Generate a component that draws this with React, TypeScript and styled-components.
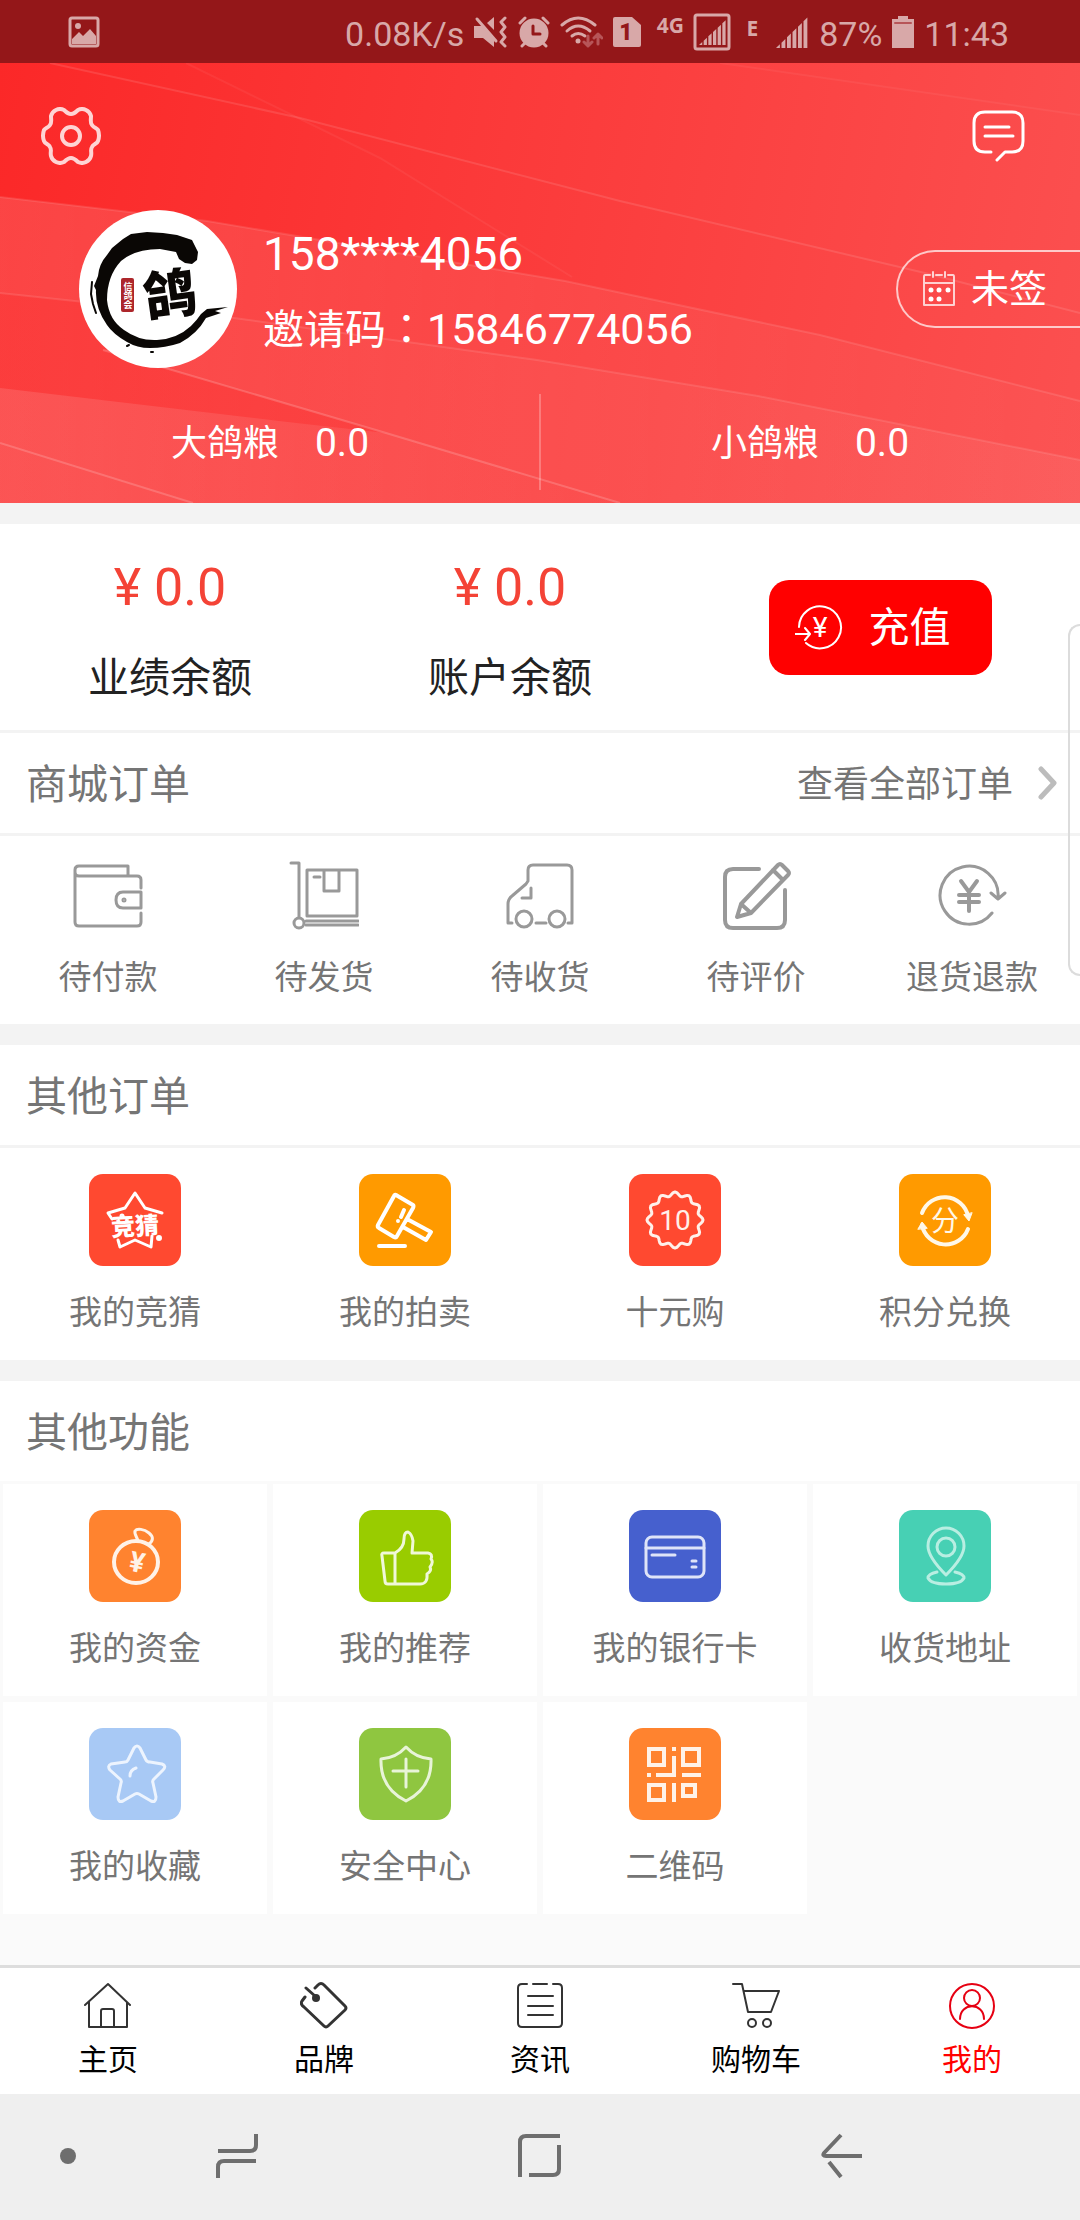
import React from 'react';
import styled, { createGlobalStyle } from 'styled-components';

const latin = 'Roboto, "Noto Sans CJK SC", sans-serif';

const GlobalStyle = createGlobalStyle`
  * { box-sizing: border-box; }
  body { margin: 0; background: #fafafa; font-family: ${latin}; }
  h1, h2, p { margin: 0; padding: 0; font-weight: 400; }
  button { border: 0; padding: 0; margin: 0; background: none; font: inherit; color: inherit; cursor: pointer; }
  a { color: inherit; text-decoration: none; }
  svg { display: block; flex: none; }
`;

const Page = styled.div`
  position: relative;
  display: flex;
  flex-direction: column;
  min-height: 100vh;
  overflow: hidden;
`;

/* ---------- status bar ---------- */

const StatusBar = styled.div`
  display: flex;
  align-items: center;
  justify-content: space-between;
  height: 63px;
  padding: 0 71px 0 68px;
  background: #941719;
  color: #d8a8a8;
  font-size: 34px;
  line-height: 42px;
`;

const StatusGroup = styled.div<{ $gap: number }>`
  display: flex;
  align-items: center;
  gap: ${(p) => p.$gap}px;
`;

const StatusText = styled.span`
  padding-top: 4px;
`;

const NetworkTag = styled.span`
  align-self: flex-start;
  font: 700 21px/24px "Noto Sans", sans-serif;
`;

/* ---------- profile header ---------- */

const Header = styled.header`
  position: relative;
  height: 440px;
  color: #fff;
  background: linear-gradient(100deg, #fb2828 0%, #fb3838 40%, #fb5050 100%);
`;

const HeaderArt = styled.svg`
  position: absolute;
  inset: 0;
  width: 100%;
  height: 100%;
`;

const HeaderBody = styled.div`
  position: relative;
  display: flex;
  flex-direction: column;
  height: 100%;
`;

const HeaderTools = styled.div`
  display: flex;
  justify-content: space-between;
  padding: 44px 55px 0 41px;
`;

const Profile = styled.div`
  display: flex;
  align-items: center;
  padding: 45px 0 0 79px;
`;

const Identity = styled.div`
  flex: 1;
  padding: 6px 0 0 26px;
`;

const Phone = styled.h1`
  font-size: 46px;
  line-height: 72px;
`;

const Invite = styled.p`
  font-size: 41px;
  line-height: 72px;
  b { font-weight: 400; font-size: 43px; }
  i { font-style: normal; font-family: "Noto Sans CJK TC", sans-serif; }
`;

const SignButton = styled.button`
  display: flex;
  align-items: center;
  gap: 16px;
  height: 78px;
  width: 184px;
  padding-left: 25px;
  border: 2px solid rgba(255, 255, 255, 0.7);
  border-right: 0;
  border-radius: 39px 0 0 39px;
  font-size: 38px;
  line-height: 48px;
`;

const GrainRow = styled.div`
  display: grid;
  grid-template-columns: 1fr 1fr;
  margin-top: 26px;
`;

const Grain = styled.div`
  display: flex;
  align-items: baseline;
  justify-content: center;
  gap: 36px;
  height: 96px;
  font-size: 36px;
  line-height: 98px;
  b { font-weight: 400; font-size: 39px; }
  & + & { box-shadow: -1px 0 0 rgba(255, 255, 255, 0.25), inset 1px 0 0 rgba(255, 255, 255, 0.25); }
`;

/* ---------- balances ---------- */

const Balances = styled.section`
  display: grid;
  grid-template-columns: 17fr 17fr 20fr;
  align-items: center;
  height: 227px;
  border-top: 21px solid #f3f3f3;
  background: #fff;
`;

const Balance = styled.div`
  display: flex;
  flex-direction: column;
  align-items: center;
  gap: 20px;
  padding-top: 12px;
`;

const Amount = styled.span`
  font-size: 52px;
  line-height: 70px;
  color: #f44336;
`;

const AmountLabel = styled.span`
  font-size: 41px;
  line-height: 70px;
  color: #222;
`;

const Recharge = styled.button`
  display: flex;
  align-items: center;
  justify-self: center;
  gap: 26px;
  width: 223px;
  height: 95px;
  padding-left: 26px;
  border-radius: 20px;
  background: #f00;
  color: #fff;
  font-size: 41px;
  line-height: 60px;
  span { padding-top: 2px; }
`;

/* ---------- sections ---------- */

const Section = styled.section<{ $spaced?: boolean }>`
  border-top: ${(p) => (p.$spaced ? 21 : 3)}px solid #f3f3f3;
`;

const SectionHead = styled.div`
  display: flex;
  align-items: center;
  justify-content: space-between;
  height: 100px;
  padding: 0 21px 0 26px;
  background: #fff;
  color: #757575;
`;

const Title = styled.h2`
  padding-top: 4px;
  font-size: 41px;
  line-height: 60px;
`;

const More = styled.a`
  display: flex;
  align-items: center;
  gap: 24px;
  font-size: 36px;
  line-height: 60px;
  span { padding-top: 4px; }
`;

const Tiles = styled.div<{ $cols: number; $pad: number; $height: number }>`
  display: grid;
  grid-template-columns: repeat(${(p) => p.$cols}, 1fr);
  border-top: 3px solid #f3f3f3;
  background: #fff;
  > button { padding-top: ${(p) => p.$pad}px; height: ${(p) => p.$height}px; }
`;

const Tile = styled.button`
  display: flex;
  flex-direction: column;
  align-items: center;
  gap: 23px;
  background: #fff;
  font-size: 33px;
  line-height: 48px;
  color: #757575;
`;

const FunctionGrid = styled.div`
  display: grid;
  grid-template-columns: repeat(4, 1fr);
  > button { margin: 3px; padding-top: 26px; height: 212px; }
`;

const Badge = styled.span<{ $color: string }>`
  display: block;
  border-radius: 14px;
  background: ${(p) => p.$color};
`;

/* ---------- bottom bars ---------- */

const TabBar = styled.nav`
  display: grid;
  grid-template-columns: repeat(5, 1fr);
  height: 129px;
  margin-top: auto;
  border-top: 3px solid #ddd;
  background: #fff;
`;

const Tab = styled.a<{ $active?: boolean }>`
  display: flex;
  flex-direction: column;
  align-items: center;
  gap: 7px;
  padding-top: 14px;
  font-size: 30px;
  line-height: 48px;
  color: ${(p) => (p.$active ? '#f00' : '#000')};
  svg { color: ${(p) => (p.$active ? '#e60012' : '#333')}; }
`;

const SystemBar = styled.div`
  display: grid;
  grid-template-columns: 86fr 302fr 302fr 304fr 86fr;
  align-items: center;
  justify-items: center;
  height: 126px;
  padding-bottom: 2px;
  background: #efefef;
  color: #6e6e6e;
  > :first-child { justify-self: end; padding-right: 10px; }
`;

const EdgeHandle = styled.div`
  position: absolute;
  top: 624px;
  right: 0;
  width: 12px;
  height: 352px;
  border: 2px solid #dcdcdc;
  border-right: 0;
  border-radius: 16px 0 0 16px;
`;

/* ---------- drawings ---------- */

type ArtProps = { w: number; h: number; sw?: number; children: React.ReactNode };

const Art = ({ w, h, sw = 2, children }: ArtProps) => (
  <svg
    width={w}
    height={h}
    viewBox={`0 0 ${w} ${h}`}
    fill="none"
    stroke="currentColor"
    strokeWidth={sw}
    strokeLinecap="round"
    strokeLinejoin="round"
    aria-hidden="true"
  >
    {children}
  </svg>
);

type GlyphProps = { x: number; y: number; size: number; weight?: number; color?: string; turn?: number; children: string };

const Glyph = ({ x, y, size, weight = 400, color = 'currentColor', turn = 0, children }: GlyphProps) => (
  <text
    x={x}
    y={y}
    fontFamily={latin}
    fontSize={size}
    fontWeight={weight}
    textAnchor="middle"
    fill={color}
    stroke="none"
    transform={turn ? `rotate(${turn} ${x} ${y - size / 3})` : undefined}
  >
    {children}
  </text>
);

const signalBars = (x: number, y: number, w: number, h: number) =>
  [0, 1, 2, 3, 4, 5].map((i) => {
    const step = w / 6;
    const left = x + i * step;
    const a = y + h - (h * i) / 6;
    const b = y + h - (h * (i + 0.7)) / 6;
    return <path key={i} d={`M${left} ${y + h}V${a}L${left + step * 0.7} ${b}V${y + h}Z`} fill="currentColor" stroke="none" />;
  });

const PictureIcon = () => (
  <Art w={32} h={32} sw={3}>
    <rect x="2" y="2" width="28" height="28" rx="2" />
    <circle cx="10" cy="10" r="3" fill="currentColor" stroke="none" />
    <path d="M4 28V23L11 16L15 20L22 13L28 20V28Z" fill="currentColor" stroke="none" />
  </Art>
);

const MuteIcon = () => (
  <Art w={34} h={32} sw={3}>
    <path d="M0 10H8L20 22V31L9 22H0Z" fill="currentColor" stroke="none" />
    <path d="M13 7L20 1V14Z" fill="currentColor" stroke="none" />
    <path d="M3 3L22 25" />
    <path d="M31 2L27 6L31 11L27 16L31 21L27 26L31 30" />
  </Art>
);

const AlarmIcon = () => (
  <Art w={32} h={32} sw={4}>
    <circle cx="16" cy="17" r="14.500" fill="currentColor" stroke="none" />
    <path d="M2 7L7 2M25 2L30 7M7 27L4 30M25 27L28 30" strokeWidth="3" />
    <path d="M15 10V18H22" stroke="#941719" strokeWidth="3" />
  </Art>
);

const WifiIcon = () => (
  <Art w={43} h={32} sw={3}>
    <path d="M2 9Q18 -5 35 9" />
    <path d="M7 15Q18 5 30 15" />
    <path d="M12 20Q18 15 25 20" />
    <circle cx="18" cy="25" r="2.500" fill="currentColor" stroke="none" />
    <path d="M28 20V30M24 26L28 30L32 26M38 28V18M34 22L38 18L42 22" stroke="#b75558" />
  </Art>
);

const SimIcon = () => (
  <Art w={28} h={32}>
    <path d="M2 1H19L28 9V29Q28 31 26 31H2Q0 31 0 29V3Q0 1 2 1Z" fill="currentColor" stroke="none" />
    <Glyph x={13} y={24} size={23} weight={900} color="#941719">1</Glyph>
  </Art>
);

const BoxedSignalIcon = () => (
  <Art w={38} h={38} sw={3}>
    <rect x="2" y="2" width="34" height="34" rx="2" />
    {signalBars(6, 6, 28, 26)}
  </Art>
);

const SignalIcon = () => <Art w={33} h={32}>{signalBars(0, 0, 33, 32)}</Art>;

const BatteryIcon = () => (
  <Art w={22} h={32}>
    <path d="M6 0H16V3H22V32H0V3H6Z" fill="currentColor" stroke="none" />
    <path d="M3 7H19" stroke="#b75558" />
  </Art>
);

const HeaderBackdrop = () => (
  <HeaderArt viewBox="0 0 1080 440" preserveAspectRatio="none" aria-hidden="true">
    <defs>
      <linearGradient id="leftGlow" x1="0" x2="1" y1="0" y2="0">
        <stop offset="0" stopColor="#fff" stopOpacity="0.13" />
        <stop offset="0.6" stopColor="#fff" stopOpacity="0.05" />
        <stop offset="1" stopColor="#fff" stopOpacity="0.02" />
      </linearGradient>
      <linearGradient id="lowerShade" x1="0" x2="1" y1="0" y2="0">
        <stop offset="0" stopColor="#fb3030" stopOpacity="0.4" />
        <stop offset="1" stopColor="#fb3030" stopOpacity="0" />
      </linearGradient>
      <linearGradient id="cornerGlow" x1="0" x2="1" y1="0" y2="0">
        <stop offset="0" stopColor="#fff" stopOpacity="0.12" />
        <stop offset="1" stopColor="#fff" stopOpacity="0.05" />
      </linearGradient>
    </defs>
    <path d="M0 134L207 158L565 218L820 272L1080 338V440H0Z" fill="url(#leftGlow)" />
    <path d="M0 230L234 255L537 297L758 333L1080 397V440H0Z" fill="url(#lowerShade)" />
    <path d="M103 287L172 307L386 370L620 440H1080V397L758 333L537 297L234 255Z" fill="#fff" fillOpacity="0.06" />
    <path d="M0 325L296 360L386 370L620 440H0Z" fill="url(#cornerGlow)" />
    <g fill="none" stroke="#fff" strokeOpacity="0.11" strokeWidth="2">
      <path d="M50 0L300 55L620 138L925 210L1080 250" />
      <path d="M0 134L207 158L565 218L820 272L1080 338" />
      <path d="M0 230L234 255L537 297L758 333L1080 397" />
      <path d="M103 287L172 307L386 370L620 440" strokeOpacity="0.18" />
      <path d="M0 380L193 440" strokeOpacity="0.18" />
      <path d="M186 0L380 95L572 214" strokeOpacity="0.05" />
      <path d="M720 0L1080 52" strokeOpacity="0.05" />
    </g>
  </HeaderArt>
);

const GearIcon = () => (
  <Art w={60} h={58} sw={4}>
    <path
      strokeOpacity="0.8"
      d="M15 3Q19 1 23 3C25 5 27 7 30 7C33 7 35 5 37 3Q41 1 45 3Q49 5 50 9C50 13 49 16 51 18C53 21 56 21 57 23Q59 29 57 34C56 37 52 37 51 40C49 43 51 45 50 49Q49 53 45 55Q41 57 37 55C35 53 33 51 30 51C27 51 25 53 23 55Q19 57 15 55Q11 53 10 49C9 45 11 43 9 40C8 37 4 37 3 34Q1 29 3 23C4 21 7 21 9 18C11 16 10 13 10 9Q11 5 15 3Z"
    />
    <circle cx="30" cy="29" r="9" strokeOpacity="0.8" />
  </Art>
);

const MessageIcon = () => (
  <Art w={53} h={58} sw={3}>
    <path d="M19 45H13Q2 45 2 34V16Q2 5 13 5H40Q51 5 51 16V34Q51 45 40 45H33L25 53" />
    <path d="M13 20H37M13 29H41" />
  </Art>
);

const CalendarIcon = () => (
  <Art w={32} h={36}>
    <path d="M7 4H2Q1 4 1 6V34H31V6Q31 4 30 4H25M13 4H19M1 12H31M10 1V6M22 1V6" strokeOpacity="0.75" />
    <g fill="currentColor" stroke="none">
      <circle cx="8" cy="19" r="2.500" />
      <circle cx="16" cy="19" r="2.500" />
      <circle cx="25" cy="19" r="2.500" />
      <circle cx="8" cy="28" r="2.500" />
      <circle cx="16" cy="28" r="2.500" />
    </g>
  </Art>
);

const Avatar = () => (
  <Art w={158} h={158}>
    <circle cx="79" cy="79" r="79" fill="#fff" stroke="none" />
    <path
      fill="#0a0705"
      stroke="none"
      d="M113 30L119 42L118 50L113 54L106 53L100 49L97 42L81 39Q56 39 42 51Q28 66 28 90Q30 110 45 120Q60 131 78 130Q98 129 112 116Q118 110 122 104L128 99L149 97L136 101L142 103L127 108Q118 124 101 133Q86 138 71 138Q58 138 48 132Q34 124 28 115Q16 98 17 80L15 76L19 66Q20 54 28 45L33 38L44 29L52 24L68 22L84 23L98 25Z"
    />
    <path d="M13 72L12 84L14 94L17 103M48 136L50 135M72 142L74 142" stroke="#0a0705" strokeWidth="2" />
    <rect x="42" y="68" width="13" height="34" rx="2" fill="#ad262b" stroke="none" />
    <Glyph x={49} y={80} size={9} weight={700} color="#fff">信</Glyph>
    <Glyph x={49} y={89} size={9} weight={700} color="#fff">鸽</Glyph>
    <Glyph x={49} y={98} size={9} weight={700} color="#fff">会</Glyph>
    <Glyph x={91} y={104} size={53} weight={900} color="#0a0705" turn={-8}>鸽</Glyph>
  </Art>
);

const RechargeIcon = () => (
  <Art w={48} h={46}>
    <path d="M4 23A21 21 0 1 1 11 39" />
    <path d="M0 30H15M10 24L15 30L10 36" />
    <Glyph x={25} y={33} size={28}>¥</Glyph>
  </Art>
);

const Chevron = () => (
  <Art w={22} h={34} sw={5}>
    <path d="M4 3L17 17L4 31" stroke="#bcbcbc" />
  </Art>
);

const OrderArt = ({ children }: { children: React.ReactNode }) => (
  <Art w={70} h={70} sw={3}>
    <g stroke="#999" color="#999">{children}</g>
  </Art>
);

const orderTiles = [
  {
    label: '待付款',
    art: (
      <OrderArt>
        <path d="M68 27V19Q68 15 64 15H6Q2 15 2 11V9Q2 5 6 5H55V15M2 11V61Q2 65 6 65H64Q68 65 68 61V52" />
        <path d="M68 31H50Q43 31 43 39Q43 47 50 47H68Z" />
        <circle cx="51" cy="39" r="1" />
      </OrderArt>
    ),
  },
  {
    label: '待发货',
    art: (
      <OrderArt>
        <path d="M2 2H10V56M18 9H68V55H18ZM35 9V30H50V9M25 16H31M17 60H69M17 64H69" />
        <circle cx="10" cy="62" r="5" />
      </OrderArt>
    ),
  },
  {
    label: '待收货',
    art: (
      <OrderArt>
        <path d="M7 62H3V43Q3 38 7 35L21 23L23 20V9Q23 4 28 4H62Q67 4 67 9V62H63M31 62H41M26 27V37H17" />
        <circle cx="19" cy="58" r="8" />
        <circle cx="52" cy="58" r="8" />
      </OrderArt>
    ),
  },
  {
    label: '待评价',
    art: (
      <OrderArt>
        <path d="M38 8H12Q4 8 4 16V59Q4 67 12 67H56Q64 67 64 59V29" strokeWidth="4" />
        <path d="M16 56L20 43L57 4Q59 2 61 4L67 10Q69 12 67 14L30 52ZM52 9L62 19M20 43L30 52" strokeWidth="4" />
      </OrderArt>
    ),
  },
  {
    label: '退货退款',
    art: (
      <OrderArt>
        <path d="M55 52A29 29 0 1 1 61 37M54 32L61 38L68 32" />
        <path d="M24 20L32 31L40 20M32 31V50M22 34H42M22 41H42" strokeWidth="4" />
      </OrderArt>
    ),
  },
];

const scallop = Array.from({ length: 96 }, (_, i) => {
  const a = (i / 96) * Math.PI * 2;
  const r = 26 + 2 * Math.cos(a * 12);
  return `${i ? 'L' : 'M'}${(46 + r * Math.sin(a)).toFixed(1)} ${(46 - r * Math.cos(a)).toFixed(1)}`;
}).join('') + 'Z';

const BadgeArt = ({ color, ink = '#fff', children }: { color: string; ink?: string; children: React.ReactNode }) => (
  <Badge $color={color}>
    <Art w={92} h={92} sw={3}>
      <g stroke={ink} color={ink}>{children}</g>
    </Art>
  </Badge>
);

const otherOrders = [
  {
    label: '我的竞猜',
    art: (
      <BadgeArt color="#ff4930">
        <path d="M23 45L19 39L36 34L46 19L56 34L73 39M29 66L31 73L46 66L62 73L63 62" />
        <circle cx="70" cy="64" r="1.500" />
        <circle cx="33" cy="42" r="1" />
        <Glyph x={46} y={61} size={24} weight={900} turn={-3}>竞猜</Glyph>
      </BadgeArt>
    ),
  },
  {
    label: '我的拍卖',
    art: (
      <BadgeArt color="#ff9a00">
        <path d="M37 21L54 31Q55 32 54 34L38 62Q37 64 35 63L20 54Q18 53 19 51L35 22Q36 20 37 21ZM48 45L72 58L67 66L44 53M45 36L42 43M39 47V47M20 72H46" strokeWidth="4" />
      </BadgeArt>
    ),
  },
  {
    label: '十元购',
    art: (
      <BadgeArt color="#ff4930" ink="#fff0ea">
        <path d={scallop} />
        <Glyph x={46} y={56} size={28}>10</Glyph>
      </BadgeArt>
    ),
  },
  {
    label: '积分兑换',
    art: (
      <BadgeArt color="#ff9a00" ink="#fff8e8">
        <path d="M23 39A24 24 0 0 1 69 42M69 55A24 24 0 0 1 23 51" strokeWidth="4" />
        <path d="M65 41L70 47L73 39ZM19 55L23 48L28 54Z" fill="currentColor" strokeWidth="1" />
        <Glyph x={46} y={57} size={28}>分</Glyph>
      </BadgeArt>
    ),
  },
];

const functions = [
  {
    label: '我的资金',
    art: (
      <BadgeArt color="#ff832f" ink="#fff2e8">
        <ellipse cx="47" cy="52" rx="22" ry="21" strokeWidth="4" />
        <path d="M49 31C48 27 45 24 46 21C48 18 55 19 60 23C65 27 64 31 60 34" />
        <Glyph x={48} y={62} size={28} weight={700} turn={12}>¥</Glyph>
      </BadgeArt>
    ),
  },
  {
    label: '我的推荐',
    art: (
      <BadgeArt color="#99cc00" ink="#f0f8d8">
        <path d="M36 43H25Q22 43 23 46L26 71Q26 74 29 74H36ZM36 43Q45 38 45 29Q45 22 49 22Q53 24 54 31L53 43H69Q74 44 72 49Q75 52 71 57Q73 61 68 64Q69 74 61 74H36" />
      </BadgeArt>
    ),
  },
  {
    label: '我的银行卡',
    art: (
      <BadgeArt color="#4660ce" ink="#dfe4f8">
        <rect x="17" y="27" width="58" height="40" rx="6" />
        <path d="M17 38H75M23 45H46M63 51H67M63 57H67" />
      </BadgeArt>
    ),
  },
  {
    label: '收货地址',
    art: (
      <BadgeArt color="#47d0b4" ink="#b9eee2">
        <path d="M47 65Q29 47 29 36A18 18 0 0 1 65 36Q65 47 47 65Z" />
        <circle cx="47" cy="37" r="9" />
        <path d="M38 62Q29 64 29 68Q32 74 47 74Q62 74 65 68Q65 64 56 62" />
      </BadgeArt>
    ),
  },
  {
    label: '我的收藏',
    art: (
      <BadgeArt color="#a8c9f5" ink="#edf4fe">
        <path d="M45 20Q48 16 51 20L57 32Q58 34 61 34L73 36Q78 38 74 42L65 51Q63 53 64 55L67 69Q67 75 62 73L50 66Q48 65 46 66L34 73Q29 75 29 69L32 55Q33 53 31 51L21 42Q18 38 22 36L36 34Q38 34 39 32ZM47 40Q41 42 41 48" />
      </BadgeArt>
    ),
  },
  {
    label: '安全中心',
    art: (
      <BadgeArt color="#8fc640" ink="#e8f4d8">
        <path d="M47 19Q57 30 72 31Q73 60 47 73Q21 60 22 31Q37 30 47 19ZM47 31V59M34 43H59" />
      </BadgeArt>
    ),
  },
  {
    label: '二维码',
    art: (
      <BadgeArt color="#ff832f" ink="#fff2e8">
        <g strokeLinecap="butt" strokeLinejoin="miter" strokeWidth="4">
          <path d="M20 21H35V37H20ZM54 21H70V37H54ZM20 57H35V72H20ZM54 57H66V68H54Z" />
          <path d="M45 19V23M45 28V47M18 47H22M27 47H47M53 47H72M45 55V74" />
        </g>
      </BadgeArt>
    ),
  },
];

const tabs = [
  {
    label: '主页',
    art: <path d="M1 23L24 2L46 23M5 20V45H43V20M17 45V29Q17 27 19 27H28Q30 27 30 29V45" />,
  },
  {
    label: '品牌',
    art: (
      <>
        <path d="M5 15L2 19Q0 22 4 25L24 44Q26 46 28 44L45 28Q47 26 45 24L24 3Q21 0 18 3L15 6M6 6L15 14" strokeWidth="3" />
        <circle cx="16" cy="16" r="4" fill="currentColor" stroke="none" />
      </>
    ),
  },
  {
    label: '资讯',
    art: (
      <>
        <path d="M11 2H6Q2 2 2 6V41Q2 45 6 45H42Q46 45 46 41V6Q46 2 42 2H37M17 2H31" />
        <path d="M12 14H37M12 24H37M12 33H37" />
      </>
    ),
  },
  {
    label: '购物车',
    art: (
      <>
        <path d="M1 2H10L16 30H39L47 9H12" />
        <circle cx="20" cy="41" r="4" />
        <circle cx="35" cy="41" r="4" />
      </>
    ),
  },
  {
    label: '我的',
    art: (
      <>
        <circle cx="24" cy="24" r="22" />
        <circle cx="24" cy="16" r="8" />
        <path d="M12 37C12 20 36 20 36 37" />
      </>
    ),
  },
];

const TileButton = ({ label, art }: { label: string; art: React.ReactNode }) => (
  <Tile type="button">
    {art}
    <span>{label}</span>
  </Tile>
);

export default function App() {
  return (
    <Page lang="zh-CN">
      <GlobalStyle />

      <StatusBar>
        <PictureIcon />
        <StatusGroup $gap={10}>
          <StatusText>0.08K/s</StatusText>
          <MuteIcon />
          <AlarmIcon />
          <WifiIcon />
          <SimIcon />
          <StatusGroup $gap={9}>
            <NetworkTag>&nbsp;4G</NetworkTag>
            <BoxedSignalIcon />
          </StatusGroup>
          <StatusGroup $gap={18}>
            <NetworkTag>&nbsp;E</NetworkTag>
            <SignalIcon />
          </StatusGroup>
          <StatusText>87%</StatusText>
          <BatteryIcon />
          <StatusText>11:43</StatusText>
        </StatusGroup>
      </StatusBar>

      <Header>
        <HeaderBackdrop />
        <HeaderBody>
          <HeaderTools>
            <button type="button" aria-label="设置"><GearIcon /></button>
            <button type="button" aria-label="消息"><MessageIcon /></button>
          </HeaderTools>
          <Profile>
            <Avatar />
            <Identity>
              <Phone>158****4056</Phone>
              <Invite>邀请码<i lang="zh-TW">：</i><b>15846774056</b></Invite>
            </Identity>
            <SignButton type="button">
              <CalendarIcon />
              <span>未签</span>
            </SignButton>
          </Profile>
          <GrainRow>
            <Grain><span>大鸽粮</span><b>0.0</b></Grain>
            <Grain><span>小鸽粮</span><b>0.0</b></Grain>
          </GrainRow>
        </HeaderBody>
      </Header>

      <main>
        <Balances>
          <Balance>
            <Amount>¥ 0.0</Amount>
            <AmountLabel>业绩余额</AmountLabel>
          </Balance>
          <Balance>
            <Amount>¥ 0.0</Amount>
            <AmountLabel>账户余额</AmountLabel>
          </Balance>
          <Recharge type="button">
            <RechargeIcon />
            <span>充值</span>
          </Recharge>
        </Balances>

        <Section>
          <SectionHead>
            <Title>商城订单</Title>
            <More href="#orders">
              <span>查看全部订单</span>
              <Chevron />
            </More>
          </SectionHead>
          <Tiles $cols={5} $pad={25} $height={188}>
            {orderTiles.map((t) => <TileButton key={t.label} {...t} />)}
          </Tiles>
        </Section>

        <Section $spaced>
          <SectionHead><Title>其他订单</Title></SectionHead>
          <Tiles $cols={4} $pad={26} $height={212}>
            {otherOrders.map((t) => <TileButton key={t.label} {...t} />)}
          </Tiles>
        </Section>

        <Section $spaced>
          <SectionHead><Title>其他功能</Title></SectionHead>
          <FunctionGrid>
            {functions.map((t) => <TileButton key={t.label} {...t} />)}
          </FunctionGrid>
        </Section>
      </main>

      <TabBar>
        {tabs.map((t) => (
          <Tab key={t.label} href="#tab" $active={t.label === '我的'}>
            <Art w={48} h={47}>{t.art}</Art>
            <span>{t.label}</span>
          </Tab>
        ))}
      </TabBar>

      <SystemBar>
        <button type="button" aria-label="隐藏导航栏">
          <Art w={16} h={16}><circle cx="8" cy="8" r="8" fill="currentColor" stroke="none" /></Art>
        </button>
        <button type="button" aria-label="最近任务">
          <Art w={42} h={46} sw={4}>
            <path d="M40 1V12Q40 18 34 18H2M2 45V34Q2 28 8 28H40" strokeLinecap="butt" />
          </Art>
        </button>
        <button type="button" aria-label="主屏幕">
          <Art w={43} h={46} sw={4}>
            <path d="M2 44V9Q2 3 8 3H42M41 12V36Q41 42 35 42H11" strokeLinecap="butt" />
          </Art>
        </button>
        <button type="button" aria-label="返回">
          <Art w={42} h={46} sw={4}>
            <path d="M20 2L3 20Q1 23 5 23H41M8 29L20 44" strokeLinecap="butt" />
          </Art>
        </button>
      </SystemBar>

      <EdgeHandle />
    </Page>
  );
}
